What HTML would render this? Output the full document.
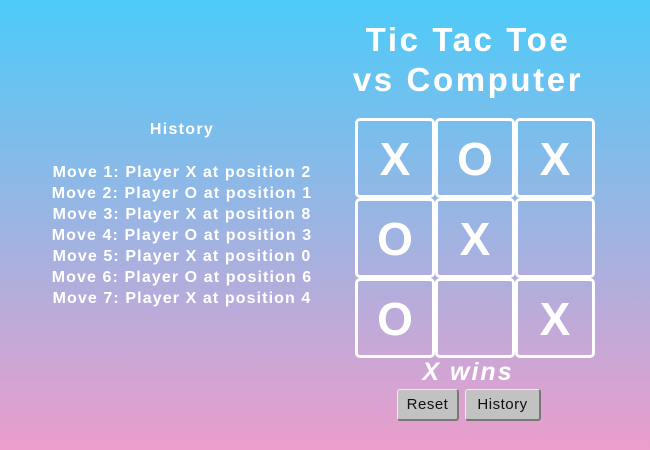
<!DOCTYPE html>
<html><head><style>
html,body{margin:0;padding:0}
body{width:650px;height:450px;overflow:hidden;background:linear-gradient(180deg,#4ccbf9 0%,#ec9dcc 100%);font-family:"Liberation Sans",sans-serif;color:#fff;position:relative}
.title{position:absolute;left:318px;width:300px;text-align:center;font-weight:bold;font-size:33px;letter-spacing:2.6px;line-height:40px;top:20px}
.hist{position:absolute;left:32px;width:300px;text-align:center;font-weight:bold;font-size:16px;letter-spacing:1.1px}
.hist h3{margin:0;font-size:16px;position:absolute;top:121px;left:0;width:300px;letter-spacing:1.3px}
.grid{position:absolute;left:355px;top:118px;width:240px;height:240px}
.c{position:absolute;width:74px;height:74px;border:3px solid #fff;border-radius:5px;font-size:46px;text-align:center;line-height:76px;font-weight:bold}
.win{position:absolute;left:368px;width:200px;text-align:center;top:358px;font-size:25px;font-weight:bold;font-style:italic;letter-spacing:2px}
.btn{position:absolute;top:389px;height:29px;background:#c2c2c2;border:1px solid #eee;border-right:2px solid #777;border-bottom:2px solid #777;border-radius:3px;color:#111;font-size:15px;line-height:29px;text-align:center;letter-spacing:.5px}
</style></head><body>
<div class="title">Tic Tac Toe<br>vs Computer</div>
<div class="hist"><h3>History</h3>
<div style="position:absolute;top:162px;left:0;width:300px;line-height:21px">
Move 1: Player X at position 2<br>Move 2: Player O at position 1<br>Move 3: Player X at position 8<br>Move 4: Player O at position 3<br>Move 5: Player X at position 0<br>Move 6: Player O at position 6<br>Move 7: Player X at position 4</div></div>
<div class="grid">
<div class="c" style="left:0;top:0">X</div>
<div class="c" style="left:80px;top:0">O</div>
<div class="c" style="left:160px;top:0">X</div>
<div class="c" style="left:0;top:80px">O</div>
<div class="c" style="left:80px;top:80px">X</div>
<div class="c" style="left:160px;top:80px"></div>
<div class="c" style="left:0;top:160px">O</div>
<div class="c" style="left:80px;top:160px"></div>
<div class="c" style="left:160px;top:160px">X</div>
</div>
<div class="win">X wins</div>
<div class="btn" style="left:397px;width:59px">Reset</div>
<div class="btn" style="left:465px;width:73px">History</div>
</body></html>
